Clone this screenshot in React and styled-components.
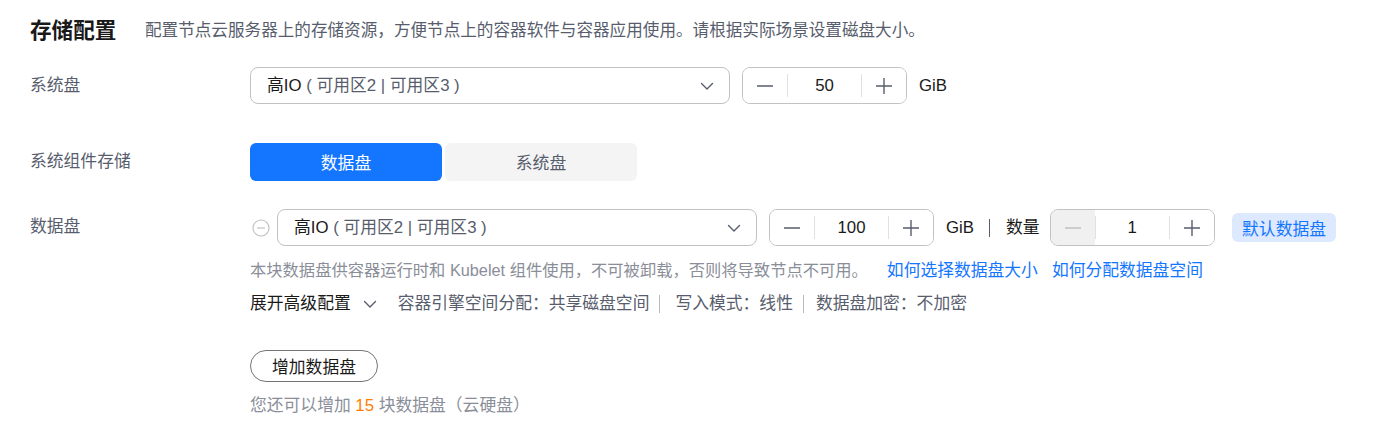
import React from "react";
import styled, { createGlobalStyle } from "styled-components";

const Global = createGlobalStyle`
  html, body { margin: 0; padding: 0; background: #fff; }
  body {
    font-family: "Liberation Sans", Arial, "Noto Sans CJK SC", sans-serif;
    font-size: 16.8px;
    color: #191919;
  }
`;

const Page = styled.div`
  padding: 17px 0 0 30px;
`;

const Header = styled.div`
  display: flex;
  align-items: center;
  height: 28px;
`;

const Title = styled.h2`
  margin: 0;
  font-size: 21.6px;
  font-weight: 700;
  line-height: 28px;
  color: #191919;
  width: 115px;
`;

const Desc = styled.span`
  color: #575d6c;
  line-height: 24px;
  font-size: 16.6px;
`;

const Row = styled.div`
  display: flex;
  align-items: ${(p) => (p.$top ? "flex-start" : "center")};
  margin-top: ${(p) => p.$mt}px;
`;

const Label = styled.div`
  width: 220px;
  flex: none;
  color: #575d6c;
  line-height: 24px;
  margin-top: ${(p) => p.$mt || 0}px;
`;

const Content = styled.div`
  display: flex;
  flex-direction: column;
`;

const Line = styled.div`
  display: flex;
  align-items: center;
`;

const Select = styled.div`
  box-sizing: border-box;
  width: 480px;
  height: 37px;
  border: 1px solid #c2c2c2;
  border-radius: 8px;
  display: flex;
  align-items: center;
  justify-content: space-between;
  padding: 0 14px 0 16px;
`;

const SelectText = styled.span`
  color: #191919;
  line-height: 24px;
`;

const Muted = styled.span`
  color: #575d6c;
`;

const Stepper = styled.div`
  box-sizing: border-box;
  width: 165px;
  height: 37px;
  margin-left: 12px;
  border: 1px solid #c2c2c2;
  border-radius: 8px;
  display: flex;
  align-items: stretch;
  overflow: hidden;
`;

const StepBtn = styled.div`
  width: 44px;
  flex: none;
  display: flex;
  align-items: center;
  justify-content: center;
  background: ${(p) => (p.$disabled ? "#f0f0f0" : "#fff")};
  color: ${(p) => (p.$disabled ? "#c2c2c2" : "#575d6c")};
`;

const StepValue = styled.div`
  flex: 1;
  display: flex;
  align-items: center;
  justify-content: center;
  color: #191919;
  position: relative;
  &::before, &::after {
    content: "";
    position: absolute;
    top: 6px;
    bottom: 6px;
    width: 1px;
    background: #dfe1e6;
  }
  &::before { left: 0; }
  &::after { right: 0; }
`;

const Unit = styled.span`
  margin-left: 12px;
  color: #191919;
  line-height: 24px;
`;

const VSep = styled.span`
  display: inline-block;
  width: 1px;
  height: ${(p) => p.$h || 18}px;
  background: ${(p) => p.$c || "#575d6c"};
  margin: 0 ${(p) => p.$r || 16}px 0 ${(p) => p.$l || 16}px;
`;

const Text = styled.span`
  color: #191919;
  line-height: 24px;
  margin-right: -2px;
`;

const Tag = styled.span`
  margin-left: 17px;
  height: 29px;
  padding: 0 10.5px;
  border-radius: 6px;
  background: #dde9fe;
  color: #1476ff;
  display: inline-flex;
  align-items: center;
`;

const Tabs = styled.div`
  display: flex;
  gap: 3px;
`;

const Tab = styled.div`
  width: 192px;
  height: 38px;
  border-radius: 6px;
  display: flex;
  align-items: center;
  justify-content: center;
  background: ${(p) => (p.$active ? "#1476ff" : "#f4f4f4")};
  color: ${(p) => (p.$active ? "#fff" : "#575d6c")};
`;

const RemoveIcon = styled.span`
  width: 18px;
  margin: 0 7px 0 2px;
  display: inline-flex;
`;

const Help = styled.div`
  margin-top: 12px;
  line-height: 24px;
  color: #8a8e99;
  display: flex;
  align-items: baseline;
`;

const HelpText = styled.span`
  font-size: 16.3px;
`;

const Link = styled.a`
  color: #1476ff;
  text-decoration: none;
  margin-left: ${(p) => p.$ml ?? 16}px;
`;

const Advanced = styled.div`
  margin-top: 9px;
  line-height: 24px;
  display: flex;
  align-items: center;
  color: #575d6c;
`;

const Toggle = styled.span`
  color: #191919;
  display: inline-flex;
  align-items: center;
  gap: 11px;
  margin-right: 20px;
`;

const AddBtn = styled.button`
  margin-top: 34px;
  width: 128px;
  height: 32px;
  box-sizing: border-box;
  border: 1px solid #757575;
  border-radius: 16px;
  background: #fff;
  color: #191919;
  font: inherit;
  padding: 0;
  align-self: flex-start;
`;

const Note = styled.div`
  margin-top: 12px;
  line-height: 24px;
  color: #8a8e99;
`;

const Count = styled.span`
  color: #ff7d00;
`;

const Chevron = ({ size = 14, color = "#575d6c" }) => (
  <svg width={size} height={size} viewBox="0 0 16 16" fill="none">
    <path d="M2.5 5.5 L8 11 L13.5 5.5" stroke={color} strokeWidth="1.4" strokeLinecap="round" strokeLinejoin="round" />
  </svg>
);

const Minus = () => (
  <svg width="18" height="18" viewBox="0 0 18 18">
    <path d="M1 9 H17" stroke="currentColor" strokeWidth="1.4" />
  </svg>
);

const Plus = () => (
  <svg width="18" height="18" viewBox="0 0 18 18">
    <path d="M1 9 H17 M9 1 V17" stroke="currentColor" strokeWidth="1.4" />
  </svg>
);

const CircleMinus = () => (
  <svg width="18" height="18" viewBox="0 0 18 18" fill="none">
    <circle cx="9" cy="9" r="8" stroke="#c2c2c2" strokeWidth="1.2" />
    <path d="M5 9 H13" stroke="#c2c2c2" strokeWidth="1.2" />
  </svg>
);

const DiskSelect = () => (
  <Select>
    <SelectText>
      高IO <Muted>( 可用区2 | 可用区3 )</Muted>
    </SelectText>
    <Chevron size={16} />
  </Select>
);

const NumberStepper = ({ value, minDisabled }) => (
  <Stepper>
    <StepBtn $disabled={minDisabled}><Minus /></StepBtn>
    <StepValue>{value}</StepValue>
    <StepBtn><Plus /></StepBtn>
  </Stepper>
);

export default function App() {
  return (
    <>
      <Global />
      <Page>
        <Header>
          <Title>存储配置</Title>
          <Desc>配置节点云服务器上的存储资源，方便节点上的容器软件与容器应用使用。请根据实际场景设置磁盘大小。</Desc>
        </Header>

        <Row $mt={22}>
          <Label>系统盘</Label>
          <Line>
            <DiskSelect />
            <NumberStepper value="50" />
            <Unit>GiB</Unit>
          </Line>
        </Row>

        <Row $mt={39}>
          <Label>系统组件存储</Label>
          <Tabs>
            <Tab $active>数据盘</Tab>
            <Tab>系统盘</Tab>
          </Tabs>
        </Row>

        <Row $mt={28} $top>
          <Label $mt={6}>数据盘</Label>
          <Content>
            <Line>
              <RemoveIcon><CircleMinus /></RemoveIcon>
              <DiskSelect />
              <NumberStepper value="100" />
              <Unit>GiB</Unit>
              <VSep $l={15} $r={16} />
              <Text>数量</Text>
              <NumberStepper value="1" minDisabled />
              <Tag>默认数据盘</Tag>
            </Line>
            <Help>
              <HelpText>本块数据盘供容器运行时和 Kubelet 组件使用，不可被卸载，否则将导致节点不可用。</HelpText>
              <Link $ml={19}>如何选择数据盘大小</Link>
              <Link $ml={14}>如何分配数据盘空间</Link>
            </Help>
            <Advanced>
              <Toggle>
                展开高级配置
                <Chevron size={16} />
              </Toggle>
              容器引擎空间分配：共享磁盘空间
              <VSep $c="#b5b8bf" $l={10} $r={15} />
              写入模式：线性
              <VSep $c="#b5b8bf" $l={10} $r={12} />
              数据盘加密：不加密
            </Advanced>
            <AddBtn>增加数据盘</AddBtn>
            <Note>
              您还可以增加 <Count>15</Count> 块数据盘（云硬盘）
            </Note>
          </Content>
        </Row>
      </Page>
    </>
  );
}
